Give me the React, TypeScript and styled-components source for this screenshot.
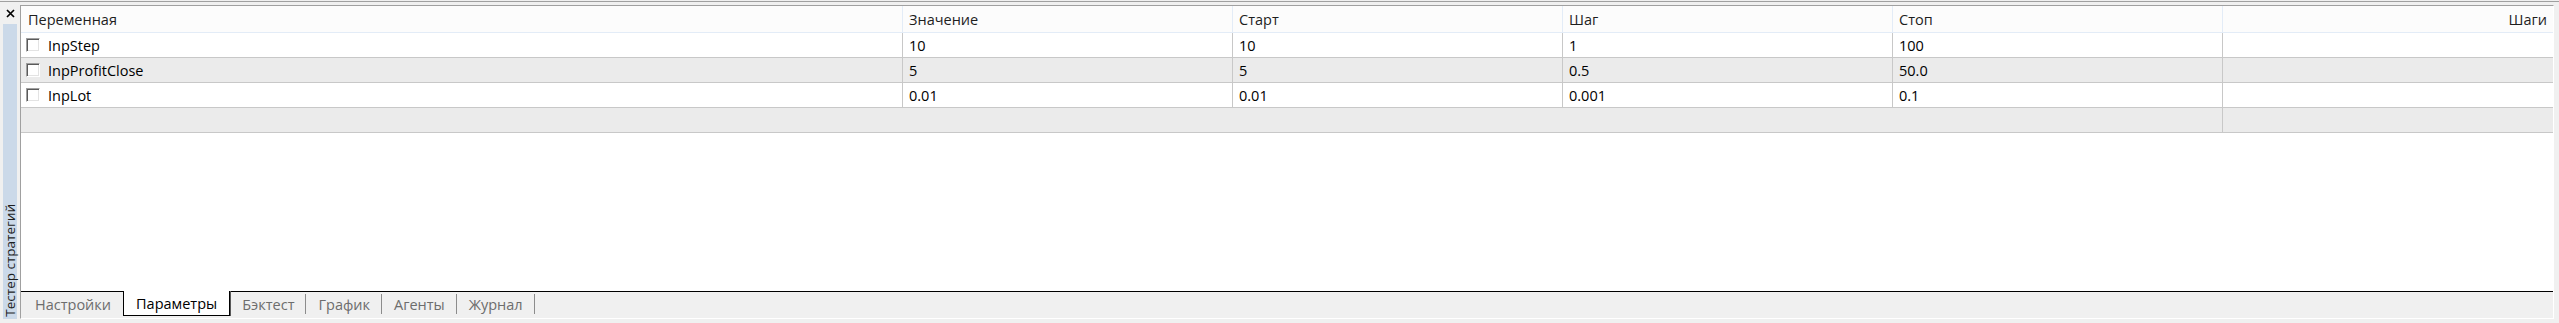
import styled, { createGlobalStyle } from "styled-components";

const GlobalStyle = createGlobalStyle`
  html, body {
    margin: 0;
    padding: 0;
    background: #f0f0f0;
    font-family: "Open Sans", "Noto Sans", sans-serif;
    font-size: 14.5px;
    color: #000;
  }
`;

const Window = styled.div`
  height: 323px;
  display: flex;
  flex-direction: column;
  background: #f0f0f0;
  box-sizing: border-box;
  padding-top: 1px;
`;

const TopRule = styled.div`
  height: 1px;
  background: #a0a0a0;
`;

const Body = styled.div`
  flex: 1;
  display: flex;
  min-height: 0;
  padding: 3px 5px 4px 0;
`;

const Sidebar = styled.div`
  width: 20px;
  margin-top: -3px;
  display: flex;
  flex-direction: column;
  align-items: center;
`;

const CloseButton = styled.div`
  width: 20px;
  height: 18px;
  display: flex;
  align-items: center;
  justify-content: center;
  padding-top: 2px;
`;

const VerticalTab = styled.div`
  flex: 1;
  width: 14px;
  margin-top: 2px;
  background: #cbd9e9;
  display: flex;
  align-items: flex-end;
  justify-content: center;
`;

const VerticalLabel = styled.span`
  writing-mode: vertical-rl;
  transform: rotate(180deg);
  font-size: 13.5px;
  line-height: 14px;
  color: #1e1e1e;
  white-space: nowrap;
  padding-top: 2px;
`;

const Frame = styled.div`
  flex: 1;
  display: flex;
  flex-direction: column;
  border-style: solid;
  border-width: 1px;
  border-color: #a0a0a0 #ffffff #ffffff #a0a0a0;
  min-width: 0;
`;

const Content = styled.div`
  flex: 1;
  background: #fff;
`;

const Row = styled.div<{ $alt?: boolean; $header?: boolean }>`
  display: grid;
  grid-template-columns: 882px 330px 330px 330px 330px 1fr;
  height: ${(p) => (p.$header ? "27px" : "25px")};
  box-sizing: border-box;
  background: ${(p) => (p.$header ? "#fcfcfc" : p.$alt ? "#ebebeb" : "#fff")};
  border-bottom: 1px solid ${(p) => (p.$header ? "#e3ecf7" : "#c8c8c8")};
`;

const Cell = styled.div<{ $header?: boolean; $right?: boolean; $span?: number }>`
  display: flex;
  align-items: center;
  justify-content: ${(p) => (p.$right ? "flex-end" : "flex-start")};
  gap: 8px;
  padding: 0 6px;
  box-sizing: border-box;
  white-space: nowrap;
  overflow: hidden;
  color: ${(p) => (p.$header ? "#1e1e1e" : "#000")};
  grid-column: ${(p) => (p.$span ? `span ${p.$span}` : "auto")};

  &:not(:last-child) {
    border-right: 1px solid ${(p) => (p.$header ? "#e3ecf7" : "#c8c8c8")};
  }
`;

const FirstCell = styled(Cell)`
  padding-left: 5px;
`;

const HeaderFirst = styled(Cell)`
  padding-left: 7px;
`;

const Checkbox = styled.span`
  width: 14px;
  height: 14px;
  box-sizing: border-box;
  border-style: solid;
  border-width: 1px;
  border-color: #a0a0a0 #ffffff #ffffff #a0a0a0;
  box-shadow: inset 1px 1px 0 #5a5a5a, inset -1px -1px 0 #e3e3e3;
  background: #fff;
  flex-shrink: 0;
`;

const TabBar = styled.div`
  height: 27px;
  box-sizing: border-box;
  border-top: 1px solid #000;
  display: flex;
  align-items: flex-start;
  padding-left: 2px;
  background: #f0f0f0;
`;

const Tab = styled.div<{ $active?: boolean; $sep?: boolean }>`
  height: ${(p) => (p.$active ? "25px" : "24px")};
  margin-top: ${(p) => (p.$active ? "-1px" : "0")};
  box-sizing: border-box;
  padding: 0 12px;
  display: flex;
  align-items: center;
  font-size: 14.5px;
  color: ${(p) => (p.$active ? "#000" : "#6d6d6d")};
  background: ${(p) => (p.$active ? "#fff" : "transparent")};
  border: ${(p) => (p.$active ? "1px solid #000" : "none")};
  border-top: none;
  box-shadow: ${(p) => (p.$active ? "1px 0 0 #5a5a5a" : "none")};
  position: relative;

  ${(p) =>
    p.$sep &&
    `
    &::after {
      content: "";
      position: absolute;
      right: 0;
      top: 2px;
      height: 20px;
      width: 1px;
      background: #8c8c8c;
    }
  `}
`;

const params = [
  { name: "InpStep", value: "10", start: "10", step: "1", stop: "100" },
  { name: "InpProfitClose", value: "5", start: "5", step: "0.5", stop: "50.0" },
  { name: "InpLot", value: "0.01", start: "0.01", step: "0.001", stop: "0.1" },
];

const tabs = ["Настройки", "Параметры", "Бэктест", "График", "Агенты", "Журнал"];

export default function App() {
  return (
    <Window>
      <GlobalStyle />
      <TopRule />
      <Body>
        <Sidebar>
          <CloseButton>
            <svg width="9" height="9" viewBox="0 0 9 9">
              <path d="M1 1L8 8M8 1L1 8" stroke="#000" strokeWidth="1.7" />
            </svg>
          </CloseButton>
          <VerticalTab>
            <VerticalLabel>Тестер стратегий</VerticalLabel>
          </VerticalTab>
        </Sidebar>
        <Frame>
          <Content>
            <Row $header>
              <HeaderFirst $header>Переменная</HeaderFirst>
              <Cell $header>Значение</Cell>
              <Cell $header>Старт</Cell>
              <Cell $header>Шаг</Cell>
              <Cell $header>Стоп</Cell>
              <Cell $header $right>
                Шаги
              </Cell>
            </Row>
            {params.map((p, i) => (
              <Row key={p.name} $alt={i % 2 === 1}>
                <FirstCell>
                  <Checkbox />
                  {p.name}
                </FirstCell>
                <Cell>{p.value}</Cell>
                <Cell>{p.start}</Cell>
                <Cell>{p.step}</Cell>
                <Cell>{p.stop}</Cell>
                <Cell />
              </Row>
            ))}
            <Row $alt>
              <Cell $span={5} />
              <Cell />
            </Row>
          </Content>
          <TabBar>
            {tabs.map((t, i) => (
              <Tab key={t} $active={i === 1} $sep={i >= 2}>
                {t}
              </Tab>
            ))}
          </TabBar>
        </Frame>
      </Body>
    </Window>
  );
}
